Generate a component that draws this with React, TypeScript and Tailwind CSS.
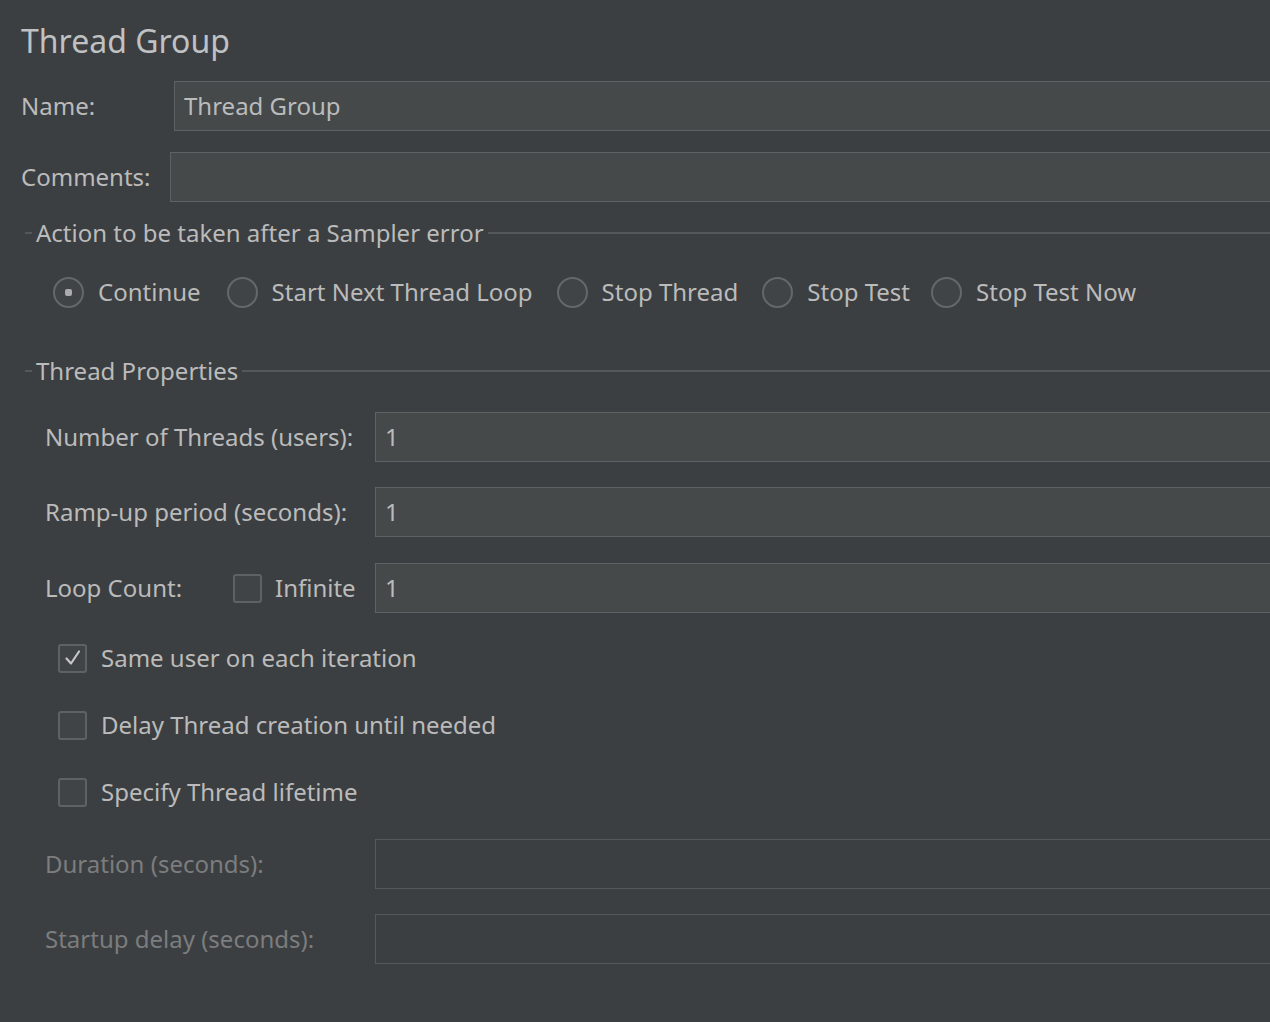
import React from "react";

const font = { fontFamily: '"Noto Sans", "Open Sans", sans-serif' };

function Field({ value, disabled }: { value?: string; disabled?: boolean }) {
  return (
    <div
      className={
        "flex-1 h-[50px] flex items-center pl-[9px] border border-r-0 " +
        (disabled ? "border-[#56595b] bg-[#3c3f41]" : "border-[#5f6264] bg-[#45494a]")
      }
    >
      <span className="text-[24px] text-[#bbbbbb] leading-none">{value}</span>
    </div>
  );
}

function Radio({ label, checked, className }: { label: string; checked?: boolean; className?: string }) {
  return (
    <div className={"flex items-center " + (className || "")}>
      <div className="w-[31px] h-[31px] rounded-full border-2 border-[#65686a] bg-[#414446] flex items-center justify-center">
        {checked && <div className="w-[7px] h-[7px] rounded-[2px] bg-[#a9abad]" />}
      </div>
      <span className="ml-[14px] text-[24px] text-[#bbbbbb] leading-none">{label}</span>
    </div>
  );
}

function Check({ checked }: { checked?: boolean }) {
  return (
    <div className="w-[29px] h-[29px] rounded-[3px] border-2 border-[#5f6264] bg-[#414446] flex items-center justify-center">
      {checked && (
        <svg width="20" height="20" viewBox="0 0 20 20" fill="none">
          <path d="M3.5 10.5 L8 15.5 L16 3.5" stroke="#c4c6c8" strokeWidth="2.2" strokeLinecap="round" strokeLinejoin="round" />
        </svg>
      )}
    </div>
  );
}

function CheckRow({ label, checked, className }: { label: string; checked?: boolean; className: string }) {
  return (
    <div className={"flex items-center h-[30px] pl-[58px] " + className}>
      <Check checked={checked} />
      <span className="ml-[14px] text-[24px] text-[#bbbbbb] leading-none">{label}</span>
    </div>
  );
}

function Section({ title, className }: { title: string; className: string }) {
  return (
    <div className={"flex items-center h-[40px] pl-[25px] " + className}>
      <div className="w-[7px] h-[2px] bg-[#55585a]" />
      <span className="ml-[4px] text-[24px] text-[#bbbbbb] leading-none">{title}</span>
      <div className="flex-1 h-[2px] bg-[#55585a] ml-[4px]" />
    </div>
  );
}

function PropRow({ label, value, disabled, className }: { label: string; value?: string; disabled?: boolean; className: string }) {
  return (
    <div className={"flex items-center pl-[45px] " + className}>
      <span className={"w-[330px] text-[24px] leading-none " + (disabled ? "text-[#7b7d7f]" : "text-[#bbbbbb]")}>
        {label}
      </span>
      <Field value={value} disabled={disabled} />
    </div>
  );
}

export default function App() {
  return (
    <div className="w-[1270px] h-[1022px] bg-[#3c3f41] overflow-hidden flex flex-col" style={font}>
      <div className="h-[81px] flex items-center pl-[21px]">
        <span className="text-[32px] text-[#bfc1c3] leading-none">Thread Group</span>
      </div>

      <div className="flex items-center pl-[21px]">
        <span className="w-[153px] text-[24px] text-[#bbbbbb] leading-none">Name:</span>
        <Field value="Thread Group" />
      </div>
      <div className="flex items-center pl-[21px] mt-[21px]">
        <span className="w-[149px] text-[24px] text-[#bbbbbb] leading-none">Comments:</span>
        <Field />
      </div>

      <Section title="Action to be taken after a Sampler error" className="mt-[11px]" />
      <div className="flex items-center h-[40px] pl-[53px] mt-[19px] gap-[24px]">
        <Radio label="Continue" checked className="mr-[2px]" />
        <Radio label="Start Next Thread Loop" />
        <Radio label="Stop Thread" />
        <Radio label="Stop Test" className="mr-[-3px]" />
        <Radio label="Stop Test Now" />
      </div>

      <Section title="Thread Properties" className="mt-[39px]" />
      <PropRow label="Number of Threads (users):" value="1" className="mt-[21px]" />
      <PropRow label="Ramp-up period (seconds):" value="1" className="mt-[25px]" />
      <div className="flex items-center pl-[45px] mt-[26px]">
        <span className="w-[188px] text-[24px] text-[#bbbbbb] leading-none">Loop Count:</span>
        <Check />
        <span className="ml-[13px] w-[100px] text-[24px] text-[#bbbbbb] leading-none">Infinite</span>
        <Field value="1" />
      </div>

      <CheckRow label="Same user on each iteration" checked className="mt-[30px]" />
      <CheckRow label="Delay Thread creation until needed" className="mt-[37px]" />
      <CheckRow label="Specify Thread lifetime" className="mt-[37px]" />

      <PropRow label="Duration (seconds):" disabled className="mt-[32px]" />
      <PropRow label="Startup delay (seconds):" disabled className="mt-[25px]" />
    </div>
  );
}
